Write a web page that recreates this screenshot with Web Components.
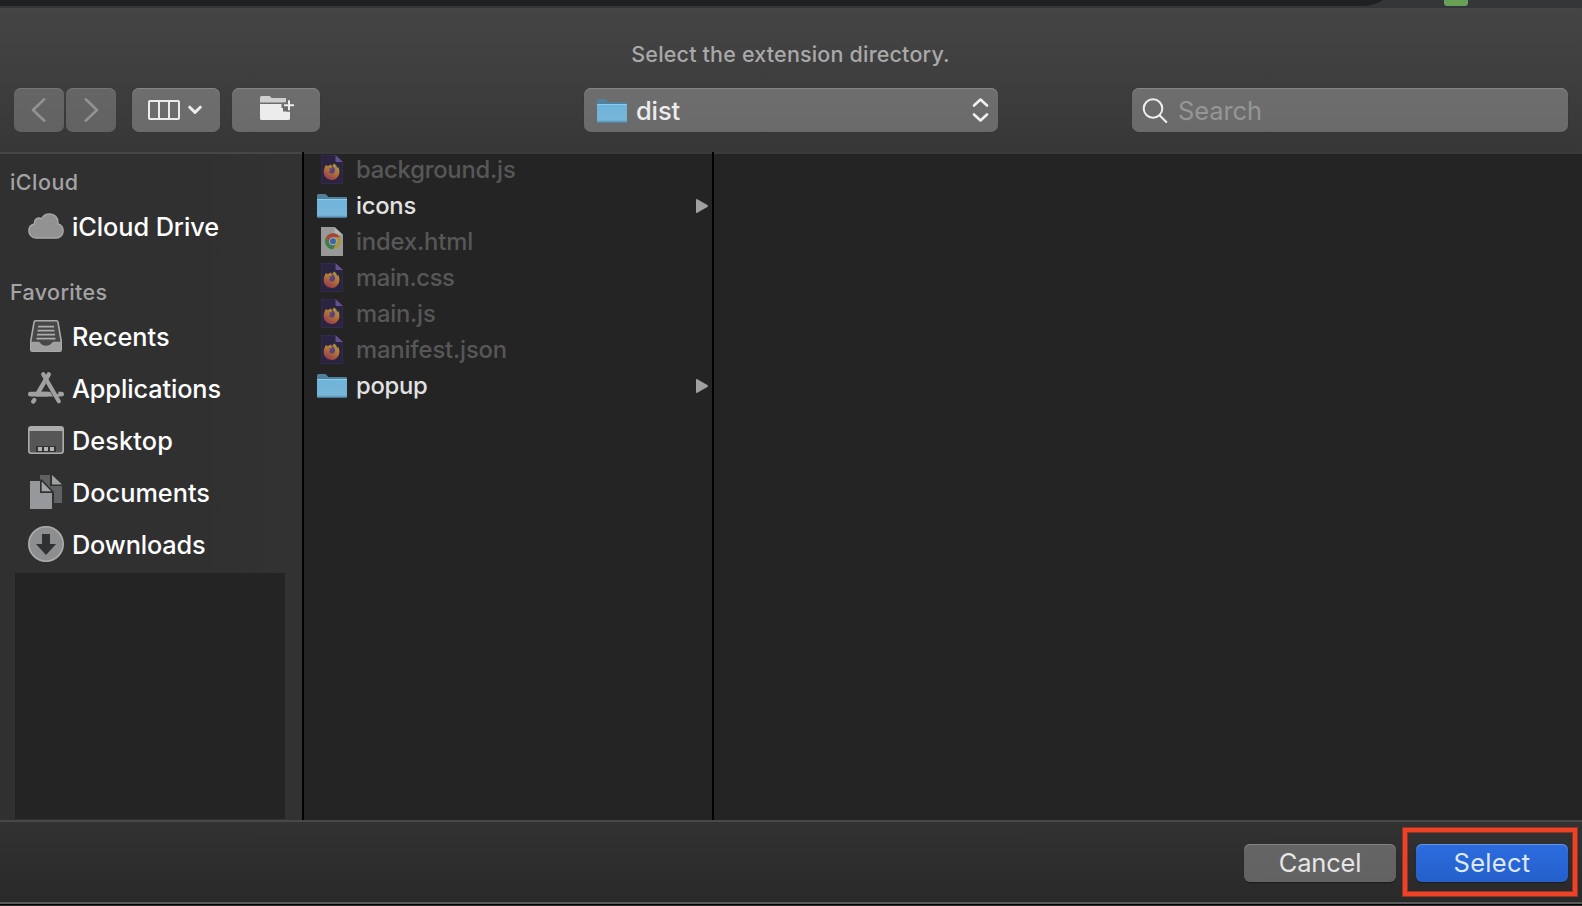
<!DOCTYPE html>
<html lang="en">
<head>
<meta charset="utf-8">
<title>Select the extension directory</title>
<style>
html,body{margin:0;height:100%;background:#242424;overflow:hidden}
body{font-family:Inter,"Liberation Sans",sans-serif}
</style>
</head>
<body>
<open-dialog></open-dialog>
<script>
const ICONS = {
back:`<svg width="50" height="44" viewBox="0 0 50 44" fill="none" stroke="#929292" stroke-width="2.6" stroke-linecap="round" stroke-linejoin="round"><path d="M30.3 11.3 19 22l11.3 10.7"/></svg>`,
forward:`<svg width="50" height="44" viewBox="0 0 50 44" fill="none" stroke="#929292" stroke-width="2.6" stroke-linecap="round" stroke-linejoin="round"><path d="M19.7 11.3 31 22 19.7 32.7"/></svg>`,
columns:`<svg width="88" height="44" viewBox="0 0 88 44" fill="none" stroke="#ececec" stroke-width="2"><rect x="17" y="13" width="30" height="18" rx="1"/><path d="M27 13v18M37 13v18"/><path d="m57.700 19.200 5.300 5.200 5.300-5.200" stroke-width="3" stroke-linecap="round" stroke-linejoin="round"/></svg>`,
newfolder:`<svg width="88" height="44" viewBox="0 0 88 44"><path fill="#cfcfcf" d="M28 14.500V9.500Q28 8 29.500 8H37q1.300 0 1.800 1l.6 1H54v4.500z"/><path fill="#ececec" d="M28 16h21.500v4H51v3.500h7V30.500q0 1.500-1.500 1.500h-27Q28 32 28 30.500z"/><path stroke="#6b6b6b" stroke-width="5" d="M57 11.500v12M51 17.300h12"/><path stroke="#ececec" stroke-width="2" d="M57 12.300v10M52 17.300h10"/></svg>`,
updown:`<svg width="18" height="26" viewBox="0 0 18 26" fill="none" stroke="#efefef" stroke-width="2.600" stroke-linecap="round" stroke-linejoin="round"><path d="M3 8.500 9.500 2.500 16 8.500M3 17.500l6.500 6 6.500-6"/></svg>`,
search:`<svg width="26" height="26" viewBox="0 0 26 26" fill="none" stroke="#efefef" stroke-width="2" stroke-linecap="round"><circle cx="11" cy="11.500" r="9.300"/><path d="m17.800 18.500 6.500 6.500"/></svg>`,
folder:`<svg width="30" height="24" viewBox="0 0 30 24"><defs><linearGradient id="g" x2="0" y2="1"><stop stop-color="#6eb4dc"/><stop offset=".85" stop-color="#78b6d7"/><stop offset="1" stop-color="#5f9abc"/></linearGradient></defs><path fill="#50819d" d="M0 6V1.500Q0 0 1.500 0h6.300q1 0 1.800.9L11.500 3H29q1 0 1 1v3H0z"/><path fill="url(#g)" d="M0 5h30v17.500q0 1-1 1H1q-1 0-1-1z"/><path fill="#8ccbea" d="M0 5h30v1H0z"/><path fill="#4e84a3" d="M.5 22.800h29v.9H.5z"/></svg>`,
firefox:`<svg width="22" height="29" viewBox="0 0 22 29"><defs><linearGradient id="f" x1=".8" y1="0" x2=".3" y2="1"><stop stop-color="#a79b45"/><stop offset=".45" stop-color="#b47532"/><stop offset="1" stop-color="#943951"/></linearGradient></defs><path fill="#2b2440" d="M0 0h14.500L22 7v22H0z"/><path fill="none" stroke="#3a3157" stroke-width=".6" d="M.3.3h14M.3 0v28.700h21.400V7"/><path fill="#65508f" d="M14.500 0 22 7h-6.300q-1.200 0-1.200-1.200z"/><g transform="translate(-.9 -.4)"><path fill="url(#f)" d="M5.800 10.300q1.200.9 2.300 1 1.200-.900 3.100-1.300-.2 1 .7 1.700 1.200-1.700 1.900-2.700c1.700.6 2.700 2.300 3.300 4.300l1.200-.8c1.900 4.500 1.100 9-2.200 11.300-3.800 2.700-8.900 1.700-11.200-1.800-2-3.200-1.600-7.800.9-11.700z"/><path fill="#574184" d="M8.800 14c1-.4 2-.2 2.700.1-.2-1.300.3-2 .9-2.700 1.300 1.200 2.800 2.600 2.500 4.700-.4 2.500-2.400 3.200-4.100 2.700-1.200-.4-1.800-1.200-2-2.200l1.700-.5z"/></g></svg>`,
chrome:`<svg width="22" height="29" viewBox="0 0 22 29"><path fill="#999" d="M0 0h13.500L22 8v21H0z"/><path fill="#b5b5b5" d="M13.500 0 22 8h-7.300q-1.200 0-1.200-1.200z"/><circle cx="12" cy="14.200" r="8" fill="#ad953b"/><path fill="#3c7e4f" d="M5.070 10.200A8 8 0 0 0 12 22.200l3.460-6H8.540z"/><path fill="#a3463d" d="M5.070 10.200a8 8 0 0 1 13.860 0H12l-3.460 6z"/><circle cx="12" cy="14.200" r="4" fill="#a9a9a9"/><circle cx="12" cy="14.200" r="3" fill="#3d68a8"/></svg>`,
arrow:`<svg width="12" height="14" viewBox="0 0 12 14"><path fill="#a0a0a0" d="M0 1Q0-.3 1.300.3L11.300 6.100Q12.500 7 11.300 7.900L1.300 13.700Q0 14.300 0 13z"/></svg>`,
cloud:`<svg width="36" height="26" viewBox="0 0 36 26"><path fill="#929292" stroke="#a9a9a9" stroke-width="1.300" d="M8 25C3.800 25 .8 21.700.8 17.800c0-3.500 2.200-6 5.500-6.800C6 7.300 8 5 11 5c1 0 1.800.3 2.500.7C15 2.500 18 .8 21.500.8c5 0 8.600 3.700 8.500 8.700v1.300c3.200.9 5.200 3.600 5.200 6.900 0 4.200-3 7.300-7.200 7.300z"/></svg>`,
recents:`<svg width="36" height="36" viewBox="0 0 36 36"><path fill="#484849" stroke="#acacac" stroke-width="1.600" d="M7.300 2.800h21.400q1 0 1.200 1l3.300 19v9q0 1.400-1.400 1.400H4.200q-1.400 0-1.400-1.400v-9l3.300-19q.2-1 1.200-1z"/><path stroke="#acacac" stroke-width="1.700" d="M10 8.700h16M9.500 12.700h17M9 16.700h18M8.500 20.700h19"/><path fill="#a0a0a1" d="M2.800 23.700h7.400q1.200 0 1.800 1c2.500 4 9.500 4 12 0q.6-1 1.800-1h7.400v8q0 1.500-1.400 1.500H4.200q-1.400 0-1.400-1.500z"/></svg>`,
apps:`<svg width="36" height="34" viewBox="0 0 36 34" fill="none" stroke="#a1a1a2" stroke-linecap="round"><path stroke-width="4.800" d="M2.400 23.200h31.200"/><path stroke="#313132" stroke-width="6.500" stroke-linecap="butt" d="m18 7 10 17"/><path stroke-width="4.400" d="M20.800 3.300 10.200 21.500M6.300 29l-1.100 1.500"/><path stroke="#313132" stroke-width="1.300" stroke-linecap="butt" d="m17.500 10.500 8.500 14.200"/><path stroke-width="4.200" d="m15.200 3.300 15.600 27"/><path stroke-width="4.800" d="M9 23.200h10"/></svg>`,
desktop:`<svg width="36" height="28" viewBox="0 0 36 28"><rect x=".8" y=".8" width="34.400" height="26.400" rx="2.500" fill="#565657" stroke="#acacad" stroke-width="1.600"/><path fill="#acacad" d="M1 5V3q0-2 2-2h30q2 0 2 2v2z"/><path fill="#333" d="M8 20h20v6H8z"/><path fill="#b2b2b3" d="M10 21h4v4h-4zM16 21h4v4h-4zM22 21h4v4h-4z"/></svg>`,
docs:`<svg width="36" height="36" viewBox="0 0 36 36"><path fill="#606163" d="M12 1h10v11h12v17H12z"/><path fill="#a0a1a3" d="M24 1v9.500h10z"/><path fill="#303031" d="M11 5.500h3L26 18v11h-2V19.500H11z"/><path fill="#97989b" d="M2 7h10v12h12v16H2z"/><path fill="#a5a6a8" d="M13.700 7.500v9.700h9.500z"/></svg>`,
downloads:`<svg width="36" height="36" viewBox="0 0 36 36"><circle cx="18" cy="18" r="17.200" fill="#8d8e90" stroke="#acadaf" stroke-width="1.600"/><path fill="#303132" d="M14 8h8v10h6L18 29 8 18h6z"/></svg>`
};

function define(name, html, setup){
  const t = document.createElement('template');
  t.innerHTML = html;
  customElements.define(name, class extends HTMLElement{
    constructor(){
      super();
      this.attachShadow({mode:'open'}).append(t.content.cloneNode(true));
    }
    connectedCallback(){ if(setup) setup(this, this.shadowRoot); }
  });
}

define('ui-icon', `<style>:host{display:block;flex:none}svg{display:block}</style><div></div>`,
  (h,r)=>{ r.querySelector('div').innerHTML = ICONS[h.getAttribute('name')]; });

/* Label tracked so that its run is exactly "w" pixels wide. */
define('ui-label', `<style>:host{display:block;flex:none;white-space:pre}span{display:inline-block}</style><span><slot></slot></span>`,
  (h,r)=>{
    const s = r.querySelector('span'), w = +h.getAttribute('w');
    s.style.letterSpacing = ((w - s.getBoundingClientRect().width) / (h.textContent.length)) + 'px';
  });

define('browser-strip', `<style>
:host{display:flex;height:8px;background:#35363a;overflow:hidden}
.bar{width:1396px;height:6px;overflow:hidden;display:flex;align-items:flex-end}
.bar i{display:block;flex:none;width:1393px;height:56px;background:#202124;border-radius:0 0 28px 0}
.dot{width:24px;height:6px;margin-left:48px;background:#6a9f58;border-radius:0 0 3px 3px}
</style><div class="bar"><i></i></div><div class="dot"></div>`);

define('tool-button', `<style>
:host{display:flex;align-items:center;height:44px;box-sizing:border-box;border-radius:7px;
background:linear-gradient(#6e6e6e,#6a6a6a);box-shadow:inset 0 1px 0 #858585,0 0 1px #2b2b2b}
:host([dim]){background:linear-gradient(#656565,#626262);box-shadow:inset 0 1px 0 #757575}
</style><slot></slot>`);

define('dialog-toolbar', `<style>
:host{display:block;height:144px;background:linear-gradient(#454545,#373737)}
.title{display:flex;justify-content:center;padding-top:32px;height:48px;margin-left:-1px;color:#a9a9a9;font-size:21.500px;line-height:28px;font-weight:450}
.row{display:flex;padding-left:14px}
.b1,.b2{width:50px}.b2{margin-left:2px}.b3{width:88px;margin-left:16px}.b4{width:88px;margin-left:12px}
.pop{width:414px;margin-left:264px;padding:0 9px 0 13px;color:#ececec;font-size:25.500px;font-weight:450}
.pop ui-icon:first-child{margin:1px 9px 0 0}.sp{flex:1}
.search{width:436px;margin-left:134px;padding-left:10px;color:#969696;font-size:25.500px}
.search ui-label{margin-left:10px}
</style>
<div class="title"><ui-label w="318.500">Select the extension directory.</ui-label></div>
<div class="row">
<tool-button dim class="b1"><ui-icon name="back"></ui-icon></tool-button>
<tool-button dim class="b2"><ui-icon name="forward"></ui-icon></tool-button>
<tool-button class="b3"><ui-icon name="columns"></ui-icon></tool-button>
<tool-button class="b4"><ui-icon name="newfolder"></ui-icon></tool-button>
<tool-button class="pop"><ui-icon name="folder"></ui-icon><ui-label w="44">dist</ui-label><span class="sp"></span><ui-icon name="updown"></ui-icon></tool-button>
<tool-button class="search"><ui-icon name="search"></ui-icon><ui-label w="84">Search</ui-label></tool-button>
</div>`);

define('side-heading', `<style>
:host{display:block;height:28px;line-height:28px;padding-left:10px;font-size:21.500px;font-weight:500;color:#a3a3a3}
</style><slot></slot>`);

define('side-item', `<style>
:host{display:flex;align-items:center;height:52px;padding-left:28px;font-size:25.300px;color:#fff;font-weight:450}
.i{width:36px;margin-right:8px;display:flex;justify-content:center}
</style><div class="i"></div><slot></slot>`,
(h,r)=>{ r.querySelector('.i').innerHTML = `<ui-icon name="${h.getAttribute('icon')}"></ui-icon>`; });

define('side-bar', `<style>
:host{display:flex;flex-direction:column;width:302px;flex:none;box-sizing:border-box;border-top:2px solid #464646;background:linear-gradient(90deg,#303031,#303031 60%,#323233)}
.cl{margin-top:14px}.dr{margin-top:4px}.fav{margin-top:26px}.fi{margin-top:4px}
.box{width:270px;height:246px;margin:3px 0 0 15px;background:#242424}
</style>
<side-heading class="cl"><ui-label w="68.500">iCloud</ui-label></side-heading>
<side-item class="dr" icon="cloud"><ui-label w="147">iCloud Drive</ui-label></side-item>
<side-heading class="fav"><ui-label w="97.500">Favorites</ui-label></side-heading>
<side-item class="fi" icon="recents"><ui-label w="97.500">Recents</ui-label></side-item>
<side-item icon="apps"><ui-label w="149">Applications</ui-label></side-item>
<side-item icon="desktop"><ui-label w="101">Desktop</ui-label></side-item>
<side-item icon="docs"><ui-label w="138">Documents</ui-label></side-item>
<side-item icon="downloads"><ui-label w="133.500">Downloads</ui-label></side-item>
<div class="box"></div>`);

define('file-row', `<style>
:host{display:flex;align-items:center;height:36px;font-size:23.800px;color:#575757;padding:0 4px 0 13px;font-weight:450}
.i{width:30px;margin-right:9px;display:flex;justify-content:center;padding-bottom:1px}
:host([folder]){color:#e2e2e2;font-weight:470}
:host([folder]) .i{padding:0}
.t{padding-bottom:2px}
.s{flex:1}
</style><div class="i"></div><div class="t"><slot></slot></div><span class="s"></span><div class="a"></div>`,
(h,r)=>{
  r.querySelector('.i').innerHTML = `<ui-icon name="${h.getAttribute('icon')}"></ui-icon>`;
  if(h.hasAttribute('folder')) r.querySelector('.a').innerHTML = '<ui-icon name="arrow"></ui-icon>';
});

define('file-browser', `<style>
:host{display:flex;height:668px}
.line{width:2px;background:#000;flex:none}
.col{width:408px;flex:none;box-sizing:border-box;border-top:2px solid #3a3a3a;background:#242424}
.col file-row:first-child{margin-top:-2px}
.rest{width:auto;flex:1}
</style>
<side-bar></side-bar><div class="line"></div>
<div class="col">
<file-row icon="firefox"><ui-label w="159.500">background.js</ui-label></file-row>
<file-row icon="folder" folder><ui-label w="60">icons</ui-label></file-row>
<file-row icon="chrome"><ui-label w="117">index.html</ui-label></file-row>
<file-row icon="firefox"><ui-label w="98.500">main.css</ui-label></file-row>
<file-row icon="firefox"><ui-label w="79.500">main.js</ui-label></file-row>
<file-row icon="firefox"><ui-label w="151">manifest.json</ui-label></file-row>
<file-row icon="folder" folder><ui-label w="71.500">popup</ui-label></file-row>
</div><div class="line"></div><div class="col rest"></div>`);

define('push-button', `<style>
:host{display:flex;align-items:center;justify-content:center;width:152px;height:38px;box-sizing:border-box;padding-bottom:2px;border-radius:6px;font-size:25.500px;
color:#e6e6e6;background:linear-gradient(#656565,#626262);box-shadow:inset 0 1px 0 #828282,0 1px 1px #1c1c1c}
:host([primary]){color:#dfe8f9;background:linear-gradient(#2c6cdf,#2560cb);box-shadow:inset 0 1px 0 #6494e8,0 1px 1px #1c1c1c}
</style><slot></slot>`);

define('dialog-footer', `<style>
:host{display:flex;justify-content:flex-end;align-items:flex-start;height:82px;box-sizing:border-box;border-top:2px solid #48484a;background:linear-gradient(#323232,#292929);padding:6px 5px 0 0}
.c{margin:16px 7px 0 0}
.frame{border:4px solid #ee4126;width:174px;height:68px;box-sizing:border-box;padding:12px 0 0 9px;box-shadow:0 0 0 1px #8f3426,inset 0 0 0 1px #8f3426}
</style>
<push-button class="c"><ui-label w="82.500">Cancel</ui-label></push-button>
<div class="frame"><push-button primary><ui-label w="77">Select</ui-label></push-button></div>`);

define('open-dialog', `<style>
:host{display:flex;flex-direction:column;width:1582px;height:906px;overflow:hidden}
.edge{height:2px;background:#5a5a5a}.under{height:2px;background:linear-gradient(#000 50%,#2a2a2a 50%)}
</style>
<browser-strip></browser-strip><dialog-toolbar></dialog-toolbar><file-browser></file-browser><dialog-footer></dialog-footer><div class="edge"></div><div class="under"></div>`);
</script>
</body>
</html>
